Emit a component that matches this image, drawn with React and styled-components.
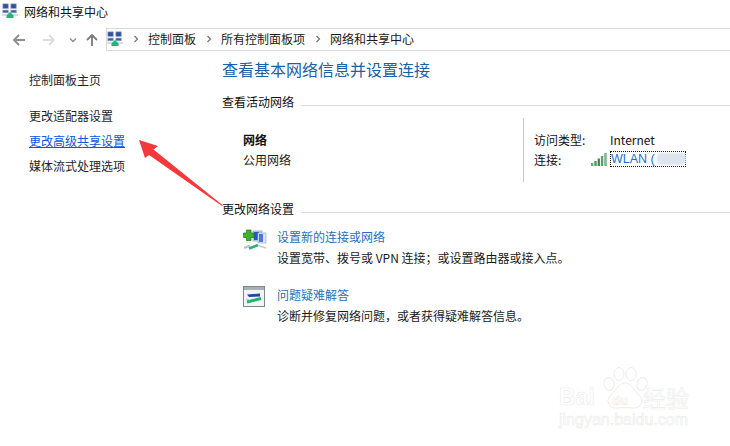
import React from "react";
import styled, { createGlobalStyle } from "styled-components";

const GlobalStyle = createGlobalStyle`
  html, body {
    margin: 0;
    padding: 0;
    background: #fff;
  }
  body {
    font-family: "Noto Sans CJK SC", "Liberation Sans", sans-serif;
    font-size: 12px;
    color: #1a1a1a;
  }
`;

const NetIcon = () => (
  <svg width="16" height="16" viewBox="0 0 18 18">
    <rect x="1" y="1" width="6" height="5" fill="#2f4f9f" stroke="#8fa0c0" strokeWidth="0.8" />
    <rect x="10" y="1" width="6" height="5" fill="#2f4f9f" stroke="#8fa0c0" strokeWidth="0.8" />
    <rect x="1" y="8" width="6" height="3" fill="#3a5aa8" stroke="#8fa0c0" strokeWidth="0.8" />
    <rect x="10" y="8" width="6" height="3" fill="#3a5aa8" stroke="#8fa0c0" strokeWidth="0.8" />
    <path d="M0 13.5H18" stroke="#a8b0b8" strokeWidth="1" />
    <path d="M9 10L13 14V17H5V14Z" fill="#22b573" />
  </svg>
);

const BackIcon = ({ color, flip }) => (
  <svg width="14" height="14" viewBox="0 0 14 14" style={flip ? { transform: "scaleX(-1)" } : undefined}>
    <path d="M13 7H2M7 2L2 7L7 12" fill="none" stroke={color} strokeWidth="1.8" />
  </svg>
);

const UpIcon = () => (
  <svg width="14" height="14" viewBox="0 0 14 14">
    <path d="M7 13V2M2 7L7 2L12 7" fill="none" stroke="#7a7a7a" strokeWidth="1.8" />
  </svg>
);

const Chevron = () => (
  <svg width="6" height="8" viewBox="0 0 6 8">
    <path d="M1.5 1L4.5 4L1.5 7" fill="none" stroke="#777" strokeWidth="1.3" />
  </svg>
);

const DownSmall = () => (
  <svg width="8" height="6" viewBox="0 0 8 6">
    <path d="M1 1.5L4 4.5L7 1.5" fill="none" stroke="#8a8a8a" strokeWidth="1.3" />
  </svg>
);

const SignalIcon = () => (
  <svg width="17" height="13" viewBox="0 0 17 13">
    <rect x="0" y="10" width="2.4" height="3" fill="#6fa87c" />
    <rect x="3.3" y="8" width="2.4" height="5" fill="#4f9a62" />
    <rect x="6.6" y="5.5" width="2.4" height="7.5" fill="#3f8e55" />
    <rect x="9.9" y="3" width="2.4" height="10" fill="#5aa36c" />
    <rect x="13.2" y="0" width="2.6" height="13" fill="#7fb98e" />
  </svg>
);

const NewConnIcon = () => (
  <svg width="24" height="24" viewBox="0 0 24 24">
    <rect x="10" y="3" width="9" height="10" fill="#c6d4ee" stroke="#8b9dc0" strokeWidth="0.7" />
    <rect x="11" y="4" width="5" height="8" fill="#2a55c9" />
    <rect x="15" y="5" width="8" height="10" fill="#dde6f6" stroke="#9dadc8" strokeWidth="0.7" />
    <rect x="16" y="6" width="4" height="8" fill="#4a78dc" />
    <path d="M3.5 2H8V5H11V9.5H8V12.5H3.5V9.5H0.5V5H3.5Z" fill="#3fb22c" stroke="#1f7a18" strokeWidth="0.7" />
    <path d="M1 20L7 17.5" stroke="#b9c2c9" strokeWidth="2" />
    <path d="M6 20.5L15 17" stroke="#22b573" strokeWidth="2.6" />
    <path d="M15 17.5L23 20" stroke="#c3cad0" strokeWidth="1.6" />
  </svg>
);

const TroubleIcon = () => (
  <svg width="23" height="22" viewBox="0 0 23 22">
    <rect x="0.5" y="0.5" width="21" height="20" fill="#f3f4f6" stroke="#7d858d" />
    <rect x="1" y="1" width="20" height="3" fill="#a8b0b8" />
    <path d="M4 8.5L17 7.5V10.5L6 11Z" fill="#1e46b8" />
    <path d="M4 16L18 12.5" stroke="#1fb36c" strokeWidth="3" />
    <path d="M3 13L7 14" stroke="#c3cad0" strokeWidth="1.2" />
  </svg>
);

const PawIcon = () => (
  <svg width="46" height="44" viewBox="0 0 46 44">
    <g fill="#fff" stroke="#ececec" strokeWidth="1">
      <ellipse cx="7" cy="17" rx="5" ry="6.5" transform="rotate(-15 7 17)" />
      <ellipse cx="17" cy="7" rx="5" ry="6.5" />
      <ellipse cx="29" cy="7" rx="5" ry="6.5" />
      <ellipse cx="40" cy="17" rx="5" ry="6.5" transform="rotate(15 40 17)" />
      <path d="M23 16C16 16 14 24 9 28C3 33 7 42 15 41C19 40.500 27 40.500 31 41C39 42 43 33 37 28C32 24 30 16 23 16Z" />
    </g>
  </svg>
);

const Page = styled.div`
  position: relative;
  width: 730px;
  height: 446px;
  overflow: hidden;
  background: #fff;
`;

const TitleBar = styled.div`
  display: flex;
  align-items: center;
  gap: 6px;
  height: 28px;
  padding: 0 0 6px 2px;
  box-sizing: border-box;
  font-size: 12px;
  color: #111;
`;

const NavBar = styled.div`
  display: flex;
  align-items: center;
  height: 23px;
`;

const NavButtons = styled.div`
  display: flex;
  align-items: center;
  width: 106px;
  padding-left: 12px;
  box-sizing: border-box;
  gap: 16px;
`;

const NavSmall = styled.span`
  display: flex;
  margin: 0 -8px 0 -3px;
`;

const AddressBar = styled.div`
  flex: 1;
  display: flex;
  align-items: center;
  height: 23px;
  box-sizing: border-box;
  border: 1px solid #d9d9d9;
  border-right: none;
  padding: 0 0 2px 0;
  gap: 9.5px;
  font-size: 12px;
  color: #1a1a1a;
`;

const Body = styled.div`
  display: flex;
  padding-top: 6px;
`;

const Sidebar = styled.nav`
  width: 222px;
  flex: none;
  padding: 14px 0 0 29px;
  box-sizing: border-box;
  display: flex;
  flex-direction: column;
`;

const SideLink = styled.a`
  height: 18px;
  line-height: 18px;
  font-size: 12px;
  margin-bottom: ${(p) => p.$gap}px;
  color: ${(p) => (p.$active ? "#0a55e6" : "#1e1e2e")};
  text-decoration: ${(p) => (p.$active ? "underline" : "none")};
`;

const Main = styled.main`
  flex: 1;
  min-width: 0;
`;

const Heading = styled.h1`
  margin: 0 0 12px;
  height: 24px;
  line-height: 24px;
  font-size: 16px;
  font-weight: 400;
  color: #1a5fa8;
`;

const SectionTitle = styled.div`
  display: flex;
  align-items: center;
  gap: 7px;
  height: 18px;
  line-height: 18px;
  font-size: 12px;
  color: #111;

  &::after {
    content: "";
    flex: 1;
    height: 1px;
    margin-top: 6px;
    background: #d9d9d9;
  }
`;

const ActiveNetwork = styled.section`
  display: flex;
  height: 64px;
  margin: 7px 0 18px;
`;

const NetworkName = styled.div`
  width: 301px;
  flex: none;
  padding: 12px 0 0 21px;
  box-sizing: border-box;
  line-height: 20px;
`;

const Strong = styled.div`
  font-weight: 700;
  color: #111;
`;

const Details = styled.div`
  flex: 1;
  border-left: 1px solid #c9c9c9;
  padding: 11px 0 0 10px;
  display: grid;
  grid-template-columns: 76px 1fr;
  grid-auto-rows: 20px;
  align-content: start;
  align-items: center;
  color: #111;
`;

const ConnectionCell = styled.div`
  display: flex;
  align-items: center;
  margin-left: -19px;
  gap: 2px;
`;

const FocusLink = styled.a`
  display: flex;
  align-items: center;
  width: 76px;
  height: 16px;
  box-sizing: border-box;
  outline: 1px dotted #111;
  outline-offset: -1px;
  padding-left: 1px;
  color: #1c6fd8;
  font-family: "Liberation Sans", sans-serif;
  font-size: 12.500px;
  white-space: pre;
`;

const Blur = styled.span`
  display: inline-block;
  width: 30px;
  height: 12px;
  margin-left: 2px;
  border-radius: 4px;
  background: #dfe5f0;
  filter: blur(1px);
`;

const TaskList = styled.div`
  display: flex;
  flex-direction: column;
  gap: 16px;
  margin-top: 8px;
  padding-left: 21px;
`;

const Task = styled.div`
  display: flex;
  gap: 11px;
`;

const TaskIcon = styled.div`
  width: 23px;
  flex: none;
  padding-top: 2px;
`;

const TaskLink = styled.a`
  display: block;
  height: 21px;
  line-height: 21px;
  color: #1f6fc0;
`;

const TaskText = styled.div`
  height: 21px;
  line-height: 21px;
  color: #1a1a1a;
`;

const Arrow = styled.svg`
  position: absolute;
  left: 138px;
  top: 139px;
`;

const Watermark = styled.div`
  position: absolute;
  left: 559px;
  top: 367px;
  width: 135px;
  height: 64px;
  color: #fff;
  -webkit-text-stroke: 0.6px #ececec;
  font-family: "Liberation Sans", sans-serif;
`;

const WatermarkPaw = styled.div`
  position: absolute;
  left: 43px;
  top: 0;
`;

const WatermarkBrand = styled.span`
  position: absolute;
  left: 0;
  top: 17px;
  font-size: 23px;
  font-weight: 700;
`;

const WatermarkDu = styled.span`
  position: absolute;
  left: 53px;
  top: 26px;
  font-size: 13px;
  font-weight: 700;
`;

const WatermarkCn = styled.span`
  position: absolute;
  left: 84px;
  top: 13px;
  font-family: "Noto Sans CJK SC", sans-serif;
  font-size: 23px;
`;

const WatermarkUrl = styled.span`
  position: absolute;
  left: 0;
  top: 44px;
  font-size: 16px;
  white-space: nowrap;
`;

export default function App() {
  return (
    <Page>
      <GlobalStyle />
      <TitleBar>
        <NetIcon />
        <span>网络和共享中心</span>
      </TitleBar>
      <NavBar>
        <NavButtons>
          <BackIcon color="#8c8c8c" />
          <BackIcon color="#dcdcdc" flip />
          <NavSmall>
            <DownSmall />
          </NavSmall>
          <UpIcon />
        </NavButtons>
        <AddressBar>
          <NetIcon />
          <Chevron />
          <span>控制面板</span>
          <Chevron />
          <span>所有控制面板项</span>
          <Chevron />
          <span>网络和共享中心</span>
        </AddressBar>
      </NavBar>
      <Body>
        <Sidebar>
          <SideLink $gap={18}>控制面板主页</SideLink>
          <SideLink $gap={7}>更改适配器设置</SideLink>
          <SideLink $gap={7} $active>
            更改高级共享设置
          </SideLink>
          <SideLink $gap={0}>媒体流式处理选项</SideLink>
        </Sidebar>
        <Main>
          <Heading>查看基本网络信息并设置连接</Heading>
          <SectionTitle>查看活动网络</SectionTitle>
          <ActiveNetwork>
            <NetworkName>
              <Strong>网络</Strong>
              <div>公用网络</div>
            </NetworkName>
            <Details>
              <span>访问类型:</span>
              <span>Internet</span>
              <span>连接:</span>
              <ConnectionCell>
                <SignalIcon />
                <FocusLink>
                  WLAN (<Blur />
                </FocusLink>
              </ConnectionCell>
            </Details>
          </ActiveNetwork>
          <SectionTitle>更改网络设置</SectionTitle>
          <TaskList>
            <Task>
              <TaskIcon>
                <NewConnIcon />
              </TaskIcon>
              <div>
                <TaskLink>设置新的连接或网络</TaskLink>
                <TaskText>{"设置宽带、拨号或 VPN 连接\uFF1B或设置路由器或接入点。"}</TaskText>
              </div>
            </Task>
            <Task>
              <TaskIcon>
                <TroubleIcon />
              </TaskIcon>
              <div>
                <TaskLink>问题疑难解答</TaskLink>
                <TaskText>{"诊断并修复网络问题\uFF0C或者获得疑难解答信息。"}</TaskText>
              </div>
            </Task>
          </TaskList>
        </Main>
      </Body>
      <Arrow width="86" height="68" viewBox="0 0 86 68">
        <path d="M1 1L20 7L15.500 10.500L85 66.500L84 67L11 16L7 19Z" fill="#f5393a" />
      </Arrow>
      <Watermark>
        <WatermarkPaw>
          <PawIcon />
        </WatermarkPaw>
        <WatermarkBrand>Bai</WatermarkBrand>
        <WatermarkDu>du</WatermarkDu>
        <WatermarkCn>经验</WatermarkCn>
        <WatermarkUrl>jingyan.baidu.com</WatermarkUrl>
      </Watermark>
    </Page>
  );
}
